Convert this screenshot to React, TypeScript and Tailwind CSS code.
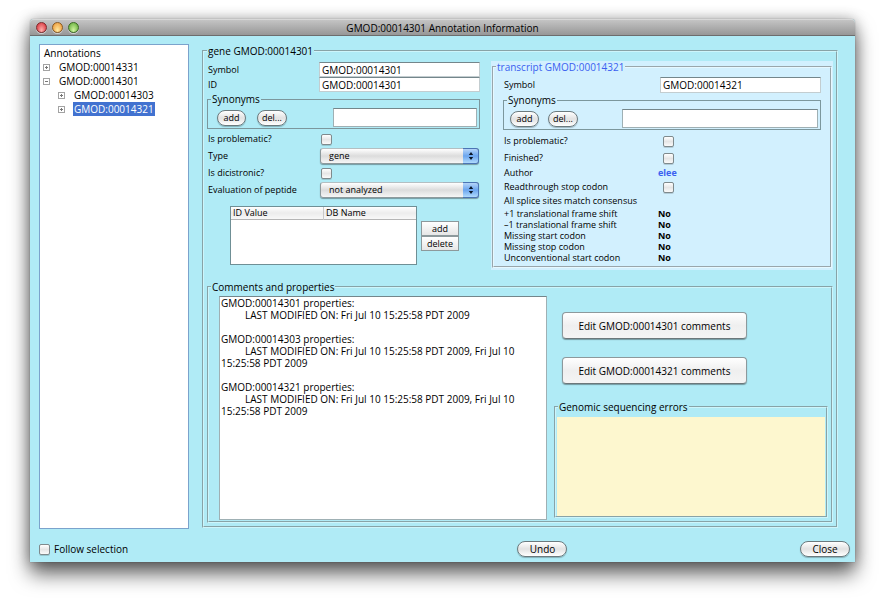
import { useState } from 'react';
import type { ReactNode } from 'react';
import clsx from 'clsx';

const ROUND_BUTTON =
  'h-4 rounded-full border border-[#6b7a7e] bg-linear-to-b from-white via-[#e2e2e2] to-white text-center leading-none shadow-[0_1px_1px_#00000040]';
const TEXT_BOX =
  'min-w-0 border border-[#c3cdd0] border-t-[#74868b] bg-white px-[2px] text-[10px] outline-none';

function TrafficLight({ name, tone }: { name: string; tone: string }) {
  return (
    <button
      type="button"
      aria-label={name}
      className={clsx('size-[11px] rounded-full border shadow-[0_1px_0_#ffffff80]', tone)}
    />
  );
}

function TickBox({ id }: { id: string }) {
  return (
    <input
      id={id}
      type="checkbox"
      className="size-[11px] shrink-0 appearance-none rounded-[2px] border border-[#7f8a8d] bg-linear-to-b from-white via-[#e6e6e6] to-[#fafafa] shadow-[0_1px_0_#00000026] checked:bg-[#4a90e2]"
    />
  );
}

function TreeItem({ label, open, depth, selected }: { label: string; open?: boolean; depth: number; selected?: boolean }) {
  return (
    <li className={clsx('flex h-[14px] items-center gap-2', depth === 2 ? 'pl-[18px]' : 'pl-[3px]')}>
      <button type="button" aria-label={open ? 'Collapse' : 'Expand'} className="flex w-[7px]">
        <svg viewBox="0 0 7 7" className="size-[7px]">
          <rect x="0.5" y="0.5" width="6" height="6" fill="#fff" stroke="#a3a3a3" />
          <path d={open ? 'M2 3.5h3' : 'M2 3.5h3M3.5 2v3'} stroke="#777" />
        </svg>
      </button>
      <span className={clsx('h-[14px] px-px leading-[14px]', selected && 'bg-[#4272d0] text-white')}>{label}</span>
    </li>
  );
}

function Synonyms({ id, lead, gap, box }: { id: string; lead: string; gap: string; box: string }) {
  return (
    <fieldset className="mt-px min-w-0 border border-[#7c979d] px-[2px] pb-px">
      <legend className="ml-px px-px text-[10px] leading-3">Synonyms</legend>
      <div className={clsx('flex items-center pt-[3px]', lead, gap)}>
        <button type="button" className={clsx(ROUND_BUTTON, 'w-[29px]')}>add</button>
        <button type="button" className={clsx(ROUND_BUTTON, 'w-[30px]')}>del...</button>
        <input
          aria-label="Synonyms"
          id={id}
          className={clsx('ml-auto h-[19px] min-w-0 border border-[#9fb0b4] border-t-[#74868b] bg-white px-1 outline-none', box)}
        />
      </div>
    </fieldset>
  );
}

function FieldRow({ id, label, children }: { id: string; label: string; children: ReactNode }) {
  return (
    <div className="flex h-4 items-center">
      <label htmlFor={id} className="w-[112px] shrink-0 pl-px">{label}</label>
      {children}
    </div>
  );
}

function PopUp({ id, options }: { id: string; options: string[] }) {
  return (
    <div className="relative mx-px h-4 flex-1">
      <select
        id={id}
        className="block h-4 w-full appearance-none rounded-[3px] border border-[#8d999c] border-t-[#b4bfc2] bg-linear-to-b from-white via-[#dcdcdc] to-[#f6f6f6] pl-2 leading-[14px] shadow-[0_1px_1px_#00000059] outline-none"
      >
        {options.map((o) => (
          <option key={o}>{o}</option>
        ))}
      </select>
      <span className="pointer-events-none absolute inset-y-0 right-0 flex w-4 items-center justify-center rounded-r-[3px] border border-l-0 border-[#4b74b4] bg-linear-to-b from-[#b4d4f8] via-[#6ba5ee] to-[#b0dafc]">
        <svg viewBox="0 0 6 10" className="h-[10px] w-[6px]">
          <path d="M3 1l2.2 3H.8zM3 9l2.2-3H.8z" fill="#0b1626" />
        </svg>
      </span>
    </div>
  );
}

function TranscriptRow({ id, label, tall, children }: { id?: string; label: string; tall?: boolean; children?: ReactNode }) {
  return (
    <div className={clsx('flex items-center', tall ? 'h-4' : 'h-[14px]')}>
      {id ? (
        <label htmlFor={id} className="w-[155px] shrink-0 pl-px">{label}</label>
      ) : (
        <span className="w-[155px] shrink-0 pl-px">{label}</span>
      )}
      {children}
    </div>
  );
}

const CHECKS = [
  '+1 translational frame shift',
  '–1 translational frame shift',
  'Missing start codon',
  'Missing stop codon',
  'Unconventional start codon',
];

const COMMENTS = `GMOD:00014301 properties:
\tLAST MODIFIED ON: Fri Jul 10 15:25:58 PDT 2009

GMOD:00014303 properties:
\tLAST MODIFIED ON: Fri Jul 10 15:25:58 PDT 2009, Fri Jul 10 15:25:58 PDT 2009

GMOD:00014321 properties:
\tLAST MODIFIED ON: Fri Jul 10 15:25:58 PDT 2009, Fri Jul 10 15:25:58 PDT 2009`;

export default function App() {
  const [comments, setComments] = useState(COMMENTS);
  const editButton =
    'h-[27px] w-[185px] rounded-[4px] border border-[#8d999c] border-b-[#6c777a] bg-linear-to-b from-white via-[#efefef] to-[#f4f4f4] shadow-[0_1px_1px_#00000059]';

  return (
    <div className="min-h-screen bg-white px-[30px] pt-[19px] pb-10 font-['Open_Sans','Noto_Sans',sans-serif] text-[10px] leading-3 text-black">
      <main className="rounded-t-[4px] bg-[#b0ebf6] shadow-[0_0_1px_#00000080,0_0_14px_#0000004d,0_12px_20px_#00000099]">
        <header className="flex h-[17px] items-center rounded-t-[4px] border-t border-b border-t-[#d8d8d8] border-b-[#6d6d6d] bg-linear-to-b from-[#c4c4c4] to-[#979797] px-[6px]">
          <div className="flex flex-1 gap-[5px]">
            <TrafficLight name="Close window" tone="border-[#7d2a2c] bg-radial-[at_50%_80%] from-[#ffb0ac] to-[#d3252f]" />
            <TrafficLight name="Minimize window" tone="border-[#8a5a22] bg-radial-[at_50%_80%] from-[#ffe9a0] to-[#ea8f2c]" />
            <TrafficLight name="Zoom window" tone="border-[#3c6a25] bg-radial-[at_50%_80%] from-[#d2f5a0] to-[#57a52f]" />
          </div>
          <h1>GMOD:00014301 Annotation Information</h1>
          <div className="flex-1" />
        </header>

        <div className="flex gap-[13px] pt-2 pr-[17px] pl-[9px]">
          <nav aria-label="Annotations" className="w-[150px] shrink-0 border border-[#7ba3cc] bg-white pt-px">
            <h2 className="h-[14px] pl-1 leading-[14px]">Annotations</h2>
            <ul>
              <TreeItem label="GMOD:00014331" depth={1} />
              <TreeItem label="GMOD:00014301" depth={1} open />
              <TreeItem label="GMOD:00014303" depth={2} />
              <TreeItem label="GMOD:00014321" depth={2} selected />
            </ul>
          </nav>

          <fieldset className="my-px min-w-0 flex-1 border-2 border-[#cdf5fb] px-[3px] pb-[3px] [border-style:groove]">
            <legend className="px-px">gene GMOD:00014301</legend>

            <div className="flex gap-[11px] pt-1 text-[9px]">
              <div className="w-[273px] shrink-0 pt-px">
                <div className="flex h-[15px] items-center">
                  <label htmlFor="gene-symbol" className="w-[112px] shrink-0 pl-px">Symbol</label>
                  <input id="gene-symbol" defaultValue="GMOD:00014301" className={clsx(TEXT_BOX, 'h-[15px] flex-1')} />
                </div>
                <div className="flex h-[15px] items-center">
                  <label htmlFor="gene-id" className="w-[112px] shrink-0 pl-px">ID</label>
                  <input id="gene-id" defaultValue="GMOD:00014301" className={clsx(TEXT_BOX, 'h-[15px] flex-1')} />
                </div>
                <Synonyms id="gene-synonyms" lead="pl-[7px]" gap="gap-[11px]" box="w-[144px]" />
                <div className="flex flex-col gap-px pt-[2px]">
                  <FieldRow id="gene-problem" label="Is problematic?">
                    <span className="flex pl-[2px]"><TickBox id="gene-problem" /></span>
                  </FieldRow>
                  <FieldRow id="gene-type" label="Type">
                    <PopUp id="gene-type" options={['gene', 'pseudogene', 'tRNA']} />
                  </FieldRow>
                  <FieldRow id="gene-dicistronic" label="Is dicistronic?">
                    <span className="flex pl-[2px]"><TickBox id="gene-dicistronic" /></span>
                  </FieldRow>
                  <FieldRow id="gene-peptide" label="Evaluation of peptide">
                    <PopUp id="gene-peptide" options={['not analyzed', 'analyzed']} />
                  </FieldRow>
                </div>
                <div className="mt-2 flex items-center gap-1 pl-[23px]">
                  <div className="h-[59px] w-[187px] border border-[#6f8f95] bg-white">
                    <table className="w-full table-fixed border-collapse">
                      <thead>
                        <tr className="h-3 border-b border-[#b5b5b5] bg-linear-to-b from-white via-[#ececec] to-[#f8f8f8]">
                          <th className="border-r border-[#c9c9c9] pl-[2px] text-left font-normal">ID Value</th>
                          <th className="pl-[2px] text-left font-normal">DB Name</th>
                        </tr>
                      </thead>
                    </table>
                  </div>
                  <div className="flex w-[38px] flex-col">
                    <button type="button" className="h-[15px] border border-[#8d999c] bg-linear-to-b from-white to-[#e6e6e6] leading-none">add</button>
                    <button type="button" className="h-[15px] border border-[#8d999c] bg-linear-to-b from-white to-[#e6e6e6] leading-none">delete</button>
                  </div>
                </div>
              </div>

              <section className="min-w-0 flex-1 bg-[#d2f0fe] px-px pb-[2px]">
                <fieldset className="min-w-0 border-2 border-[#e6f8ff] px-[2px] pb-[3px] [border-style:groove]">
                  <legend className="px-px text-[10px] leading-3 text-[#3a5ff0]">transcript GMOD:00014321</legend>
                  <div className="px-[7px] pt-1">
                    <div className="flex h-4 items-center justify-between">
                      <label htmlFor="tr-symbol" className="pl-px">Symbol</label>
                      <input id="tr-symbol" defaultValue="GMOD:00014321" className={clsx(TEXT_BOX, 'h-4 w-[161px]')} />
                    </div>
                    <Synonyms id="tr-synonyms" lead="pl-1" gap="gap-[9px]" box="w-[196px]" />
                    <div className="flex flex-col gap-px pt-[3px]">
                      <TranscriptRow id="tr-problem" label="Is problematic?" tall>
                        <span className="flex pl-[5px]"><TickBox id="tr-problem" /></span>
                      </TranscriptRow>
                      <TranscriptRow id="tr-finished" label="Finished?" tall>
                        <span className="flex pl-[5px]"><TickBox id="tr-finished" /></span>
                      </TranscriptRow>
                    </div>
                    <TranscriptRow label="Author">
                      <b className="text-[#3a5ff0]">elee</b>
                    </TranscriptRow>
                    <TranscriptRow id="tr-readthrough" label="Readthrough stop codon">
                      <span className="flex pl-[5px]"><TickBox id="tr-readthrough" /></span>
                    </TranscriptRow>
                    <TranscriptRow label="All splice sites match consensus" />
                    <dl>
                      {CHECKS.map((c) => (
                        <div key={c} className="flex leading-[11px]">
                          <dt className="w-[155px] shrink-0 pl-px">{c}</dt>
                          <dd className="font-bold">No</dd>
                        </div>
                      ))}
                    </dl>
                  </div>
                </fieldset>
              </section>
            </div>

            <fieldset className="mt-[11px] min-w-0 border-2 border-[#cdf5fb] px-[2px] pb-px [border-style:groove]">
              <legend className="px-px">Comments and properties</legend>
              <div className="flex gap-[7px] pt-[3px] pr-px pl-2">
                <textarea
                  aria-label="Comments and properties"
                  value={comments}
                  onChange={(e) => setComments(e.target.value)}
                  className="h-[224px] min-w-0 flex-[325_1_0%] resize-none border border-[#9fb0b4] border-t-[#74868b] bg-white px-px outline-none [tab-size:24px]"
                />
                <div className="flex min-w-0 flex-[275_1_0%] flex-col pt-4 pb-[2px]">
                  <div className="flex flex-col gap-[18px] pl-2">
                    <button type="button" className={editButton}>Edit GMOD:00014301 comments</button>
                    <button type="button" className={editButton}>Edit GMOD:00014321 comments</button>
                  </div>
                  <fieldset className="mt-[17px] min-w-0 flex-1 border-2 border-[#cdf5fb] px-px [border-style:groove]">
                    <legend className="ml-px px-px">Genomic sequencing errors</legend>
                    <div className="pt-1">
                      <div className="h-[99px] bg-[#fdf7cf]" />
                    </div>
                  </fieldset>
                </div>
              </div>
            </fieldset>
          </fieldset>
        </div>

        <footer className="flex items-center pt-3 pr-[5px] pb-[5px] pl-[9px]">
          <div className="flex w-[59%] items-center gap-1">
            <TickBox id="follow" />
            <label htmlFor="follow">Follow selection</label>
          </div>
          <button type="button" className={clsx(ROUND_BUTTON, 'w-[50px]')}>Undo</button>
          <button type="button" className={clsx(ROUND_BUTTON, 'ml-auto w-[50px]')}>Close</button>
        </footer>
      </main>
    </div>
  );
}
